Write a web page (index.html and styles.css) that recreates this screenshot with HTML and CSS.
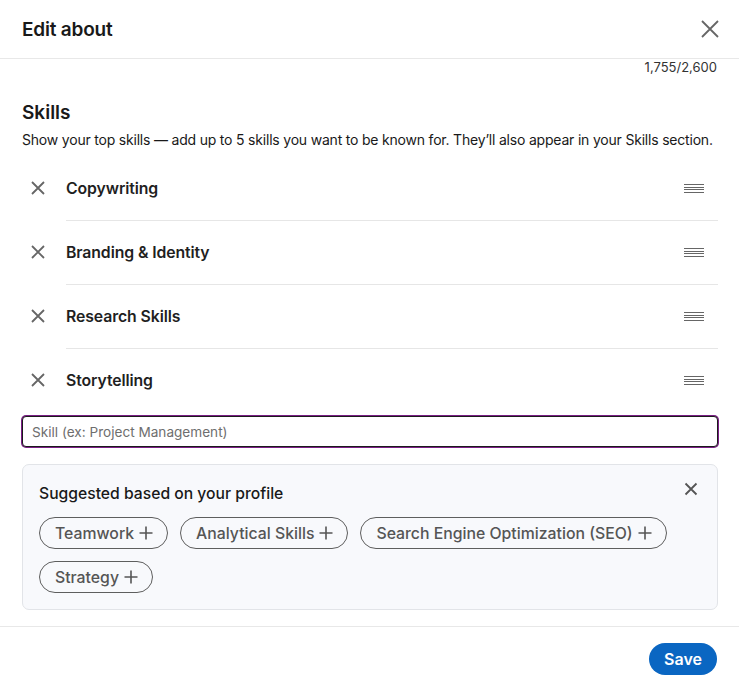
FILE: index.html
```html
<!DOCTYPE html>
<html lang="en">
<head>
    <meta charset="UTF-8">
    <meta name="viewport" content="width=device-width, initial-scale=1.0">
    <title>Edit about</title>
    <link rel="stylesheet" href="styles.css">
</head>
<body>
    <div class="modal">
        <header class="modal-header">
            <h2>Edit about</h2>
            <button class="icon-btn close-btn" aria-label="Dismiss">
                <svg width="24" height="24" viewBox="0 0 24 24"><path d="M4 4L20 20M20 4L4 20" stroke="#666" stroke-width="1.8" fill="none"/></svg>
            </button>
        </header>

        <div class="modal-body">
            <div class="counter">1,755/2,600</div>

            <h3 class="section-title">Skills</h3>
            <p class="section-desc">Show your top skills — add up to 5 skills you want to be known for. They’ll also appear in your Skills section.</p>

            <ul class="skill-list">
                <li class="skill-item">
                    <button class="icon-btn remove-btn" aria-label="Remove"><svg width="16" height="16" viewBox="0 0 16 16"><path d="M2 2L14 14M14 2L2 14" stroke="#666" stroke-width="1.8" fill="none"/></svg></button>
                    <span class="skill-name">Copywriting</span>
                    <span class="drag"></span>
                </li>
                <li class="skill-item">
                    <button class="icon-btn remove-btn" aria-label="Remove"><svg width="16" height="16" viewBox="0 0 16 16"><path d="M2 2L14 14M14 2L2 14" stroke="#666" stroke-width="1.8" fill="none"/></svg></button>
                    <span class="skill-name">Branding &amp; Identity</span>
                    <span class="drag"></span>
                </li>
                <li class="skill-item">
                    <button class="icon-btn remove-btn" aria-label="Remove"><svg width="16" height="16" viewBox="0 0 16 16"><path d="M2 2L14 14M14 2L2 14" stroke="#666" stroke-width="1.8" fill="none"/></svg></button>
                    <span class="skill-name">Research Skills</span>
                    <span class="drag"></span>
                </li>
                <li class="skill-item">
                    <button class="icon-btn remove-btn" aria-label="Remove"><svg width="16" height="16" viewBox="0 0 16 16"><path d="M2 2L14 14M14 2L2 14" stroke="#666" stroke-width="1.8" fill="none"/></svg></button>
                    <span class="skill-name">Storytelling</span>
                    <span class="drag"></span>
                </li>
            </ul>

            <input type="text" class="skill-input" placeholder="Skill (ex: Project Management)">

            <div class="suggest">
                <div class="suggest-head">
                    <span>Suggested based on your profile</span>
                    <button class="icon-btn" aria-label="Dismiss"><svg width="16" height="16" viewBox="0 0 16 16"><path d="M2.5 2.5L13.5 13.5M13.5 2.5L2.5 13.5" stroke="#555" stroke-width="1.8" fill="none"/></svg></button>
                </div>
                <div class="pills">
                    <button class="pill">Teamwork <svg class="plus" width="16" height="16" viewBox="0 0 16 16"><path d="M8 1.5V14.5M1.5 8H14.5" stroke="#555" stroke-width="1.6" fill="none"/></svg></button>
                    <button class="pill">Analytical Skills <svg class="plus" width="16" height="16" viewBox="0 0 16 16"><path d="M8 1.5V14.5M1.5 8H14.5" stroke="#555" stroke-width="1.6" fill="none"/></svg></button>
                    <button class="pill">Search Engine Optimization (SEO) <svg class="plus" width="16" height="16" viewBox="0 0 16 16"><path d="M8 1.5V14.5M1.5 8H14.5" stroke="#555" stroke-width="1.6" fill="none"/></svg></button>
                    <button class="pill">Strategy <svg class="plus" width="16" height="16" viewBox="0 0 16 16"><path d="M8 1.5V14.5M1.5 8H14.5" stroke="#555" stroke-width="1.6" fill="none"/></svg></button>
                </div>
            </div>
        </div>

        <footer class="modal-footer">
            <button class="save-btn">Save</button>
        </footer>
    </div>
</body>
</html>
```

FILE: styles.css
```css
body {
    margin: 0;
    font-family: Inter, "Noto Sans", sans-serif;
    background: #fff;
    color: #191919;
}
.modal {
    width: 739px;
    height: 690px;
    display: flex;
    flex-direction: column;
}
.icon-btn {
    background: none;
    border: none;
    padding: 0;
    cursor: pointer;
    display: flex;
    align-items: center;
    justify-content: center;
}
.modal-header {
    height: 59px;
    box-sizing: border-box;
    display: flex;
    align-items: center;
    justify-content: space-between;
    padding: 0 17px 0 22px;
    border-bottom: 1px solid #e8e8e8;
}
.modal-header h2 {
    margin: 0;
    font-size: 19px;
    font-weight: 600;
    letter-spacing: -0.2px;
}
.modal-body {
    flex: 1;
    padding: 0 21px 0 22px;
}
.counter {
    text-align: right;
    font-size: 13px;
    color: #333;
    margin-top: 0;
    line-height: 16px;
    padding-right: 1px;
}
.section-title {
    margin: 25px 0 0;
    font-size: 19px;
    font-weight: 600;
    line-height: 26px;
}
.section-desc {
    margin: 5px 0 0;
    font-size: 14px;
    line-height: 18px;
    color: #191919;
    letter-spacing: -0.2px;
}
.skill-list {
    list-style: none;
    margin: 7px 0 0;
    padding: 0;
}
.skill-item {
    display: flex;
    align-items: center;
    height: 64px;
    position: relative;
}
.skill-item + .skill-item::before {
    content: "";
    position: absolute;
    top: 0;
    left: 44px;
    right: 0;
    border-top: 1px solid #e6e6e6;
}
.remove-btn {
    width: 32px;
    height: 32px;
    margin-right: 12px;
}
.skill-name {
    flex: 1;
    font-size: 15.8px;
    font-weight: 600;
    color: #1f1f1f;
    letter-spacing: -0.1px;
}
.drag {
    width: 20px;
    height: 9px;
    margin-right: 14px;
    background: repeating-linear-gradient(to bottom, #666 0, #666 1px, transparent 1px, transparent 2.7px);
}
.skill-input {
    display: block;
    width: 100%;
    box-sizing: border-box;
    height: 31px;
    margin-top: 4px;
    padding: 0 9px;
    font-family: inherit;
    font-size: 13.6px;
    border: 1px solid #1b1b1b;
    border-radius: 4px;
    box-shadow: 0 0 0 1px #7a1f85;
    outline: none;
}
.skill-input::placeholder {
    color: #6e6e6e;
}
.suggest {
    margin-top: 17px;
    background: #f8f9fc;
    border: 1px solid #e2e4e8;
    border-radius: 7px;
    padding: 13px 16px 16px;
}
.suggest-head {
    display: flex;
    justify-content: space-between;
    align-items: flex-start;
    font-size: 15.7px;
    font-weight: 500;
    line-height: 24px;
    padding-top: 4px;
    padding-right: 2px;
}
.suggest-head .icon-btn {
    margin-top: -1px;
}
.pills {
    display: flex;
    flex-wrap: wrap;
    gap: 12px;
    margin-top: 11px;
}
.pill {
    height: 32px;
    padding: 0 13px 0 15px;
    border: 1px solid #5e5e5e;
    border-radius: 16px;
    background: transparent;
    font-family: inherit;
    font-size: 15.8px;
    font-weight: 500;
    color: #555;
    cursor: pointer;
    display: flex;
    align-items: center;
    gap: 4px;
}
.plus {
    flex: none;
}
.modal-footer {
    height: 64px;
    box-sizing: border-box;
    border-top: 1px solid #e8e8e8;
    display: flex;
    align-items: center;
    justify-content: flex-end;
    padding: 0 22px 0 0;
}
.save-btn {
    height: 32px;
    padding: 0 15px;
    border: none;
    border-radius: 16px;
    background: #0a66c2;
    color: #fff;
    font-family: inherit;
    font-size: 16px;
    font-weight: 600;
    cursor: pointer;
}
```
